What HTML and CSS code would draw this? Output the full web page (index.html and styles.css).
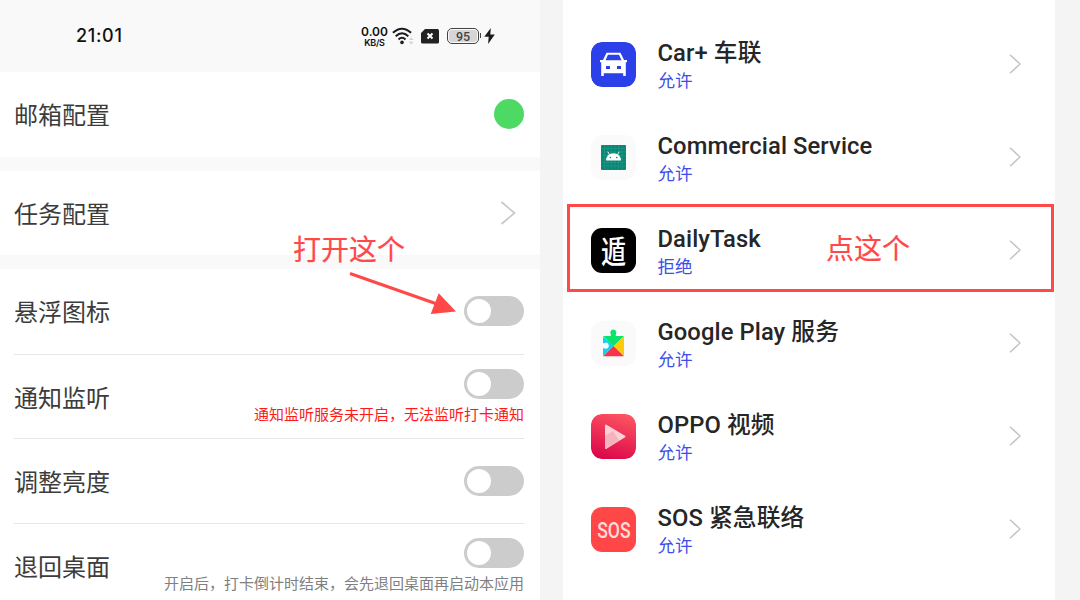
FILE: index.html
```html
<!DOCTYPE html>
<html lang="zh-CN">
<head>
<meta charset="utf-8">
<title>DailyTask</title>
<link rel="stylesheet" href="styles.css">
</head>
<body>
<div class="page">
  <section class="settings">
    <header class="status">
      <span class="clock">21:01</span>
      <div class="indicators">
        <div class="speed"><span class="rate">0.00</span><span class="unit">KB/S</span></div>
        <svg class="wifi" width="22" height="18" viewBox="0 0 22 18">
          <g fill="none" stroke="#1c1c1c" stroke-width="2">
            <path d="M.9 5.8Q10 -2.4 19.1 5.8"/><path d="M3.7 9.2Q10 3.4 16.3 9.2"/><path d="M6.5 12.4Q10 9.2 13.5 12.4"/>
          </g>
          <circle cx="10" cy="15.4" r="1.8" fill="#1c1c1c"/>
          <path d="M17 13l2.2-2.6 2.2 2.6zM17 14.8l2.2 2.6 2.2-2.6z" fill="#cfcfcf"/>
        </svg>
        <svg class="sim" width="18" height="15" viewBox="0 0 18 15">
          <path d="M4 0H16.5Q18 0 18 1.5V13Q18 14.500 16.500 14.500H1.500Q0 14.500 0 13V4z" fill="#222"/>
          <path d="M6.500 4.500l5 5M11.500 4.500l-5 5" stroke="#fff" stroke-width="2"/>
        </svg>
        <div class="battery"><span class="charge">95</span></div>
        <svg class="bolt" width="11" height="16" viewBox="0 0 11 16"><path d="M6.800 0L.3 8.700H4.700L4.100 16L10.800 6.600H6.300z" fill="#1c1c1c"/></svg>
      </div>
    </header>
    <div class="group">
      <div class="row"><span class="label">邮箱配置</span><span class="dot"></span></div>
    </div>
    <div class="group">
      <div class="row"><span class="label">任务配置</span><svg class="more" width="16" height="24" viewBox="0 0 16 24"><path d="M1.500 1L14.500 12L1.500 23"/></svg></div>
    </div>
    <div class="group">
      <div class="row"><span class="label">悬浮图标</span><span class="switch"></span></div>
      <div class="row"><span class="label">通知监听</span><div class="control"><span class="switch"></span><span class="hint warn">通知监听服务未开启，无法监听打卡通知</span></div></div>
      <div class="row"><span class="label">调整亮度</span><span class="switch"></span></div>
      <div class="row"><span class="label">退回桌面</span><div class="control"><span class="switch"></span><span class="hint">开启后，打卡倒计时结束，会先退回桌面再启动本应用</span></div></div>
    </div>
  </section>

  <section class="apps">
    <div class="app">
      <svg class="icon" viewBox="0 0 45 45">
        <rect width="45" height="45" rx="11" fill="#2c40ea"/>
        <path fill="#fff" fill-rule="evenodd" d="M15.500 10.700H29.500L33 18H36V20.200H34.800V34H32.200V31.300H12.800V34H10.200V20.200H9V18H12zM17 12.800L14.500 18.300H30.500L28 12.800zM15 24V27H19V24zM26 24V27H30V24z"/>
      </svg>
      <div class="info"><span class="name">Car+ 车联</span><span class="state">允许</span></div>
      <svg class="more" viewBox="0 0 12 20"><path d="M1 .7L11 10L1 19.300"/></svg>
    </div>
    <div class="app">
      <svg class="icon" viewBox="0 0 45 45">
        <rect width="45" height="45" rx="11" fill="#fafafa"/>
        <rect x="10" y="10" width="25" height="25" rx="1" fill="#078776"/>
        <path d="M13.500 10v25M17 10v25M20.500 10v25M24 10v25M27.500 10v25M31 10v25M10 13.500h25M10 17h25M10 20.500h25M10 24h25M10 27.500h25M10 31h25" stroke="#3b9f91" stroke-width=".4"/>
        <path d="M15 25.500a7.500 7.300 0 0 1 15 0z" fill="#fff"/>
        <path d="M18.600 20L16.800 16.700M26.400 20L28.200 16.700" stroke="#fff" stroke-width=".9"/>
        <circle cx="19.300" cy="22.500" r=".8" fill="#078776"/><circle cx="25.700" cy="22.500" r=".8" fill="#078776"/>
      </svg>
      <div class="info"><span class="name">Commercial Service</span><span class="state">允许</span></div>
      <svg class="more" viewBox="0 0 12 20"><path d="M1 .7L11 10L1 19.300"/></svg>
    </div>
    <div class="app">
      <div class="icon seal"><span class="seal-text">遁</span></div>
      <div class="info"><span class="name">DailyTask</span><span class="state">拒绝</span></div>
      <svg class="more" viewBox="0 0 12 20"><path d="M1 .7L11 10L1 19.300"/></svg>
    </div>
    <div class="app">
      <svg class="icon" viewBox="0 0 45 45">
        <rect width="45" height="45" rx="11" fill="#fafafa"/>
        <path d="M12 15.500L22.500 25L12 35z" fill="#12d0f5"/>
        <path d="M12 15H19.800V13.200A3 3 0 1 1 24.800 13.200V15H33L22.500 25.500z" fill="#0be36d"/>
        <path d="M33 15V35L22.500 25z" fill="#ffca0a"/>
        <path d="M12 35.300L22.500 25L33 35.300z" fill="#fb3348"/>
        <path d="M11.500 22.200H13.200A3 3 0 1 1 13.200 27.200H11.500z" fill="#fafafa"/>
      </svg>
      <div class="info"><span class="name">Google Play 服务</span><span class="state">允许</span></div>
      <svg class="more" viewBox="0 0 12 20"><path d="M1 .7L11 10L1 19.300"/></svg>
    </div>
    <div class="app">
      <svg class="icon" viewBox="0 0 45 45">
        <defs><linearGradient id="video" x1=".65" y1="0" x2=".35" y2="1"><stop offset="0" stop-color="#fb5360"/><stop offset="1" stop-color="#dc074b"/></linearGradient>
        <linearGradient id="play" x1="0" y1="1" x2="1" y2="0"><stop offset="0" stop-color="#f4a5b5"/><stop offset="1" stop-color="#ffe3e5"/></linearGradient></defs>
        <rect width="45" height="45" rx="11" fill="url(#video)"/>
        <path d="M15 11.500L33.500 22.500L15 34z" fill="#fbd0d6" stroke="#fbd0d6" stroke-width="2" stroke-linejoin="round"/>
        <path d="M14 22L22 17L28 26.500L15 34.500L14 34z" fill="#f19bac" opacity=".55"/>
      </svg>
      <div class="info"><span class="name">OPPO 视频</span><span class="state">允许</span></div>
      <svg class="more" viewBox="0 0 12 20"><path d="M1 .7L11 10L1 19.300"/></svg>
    </div>
    <div class="app">
      <div class="icon sos"><span class="sos-text">SOS</span></div>
      <div class="info"><span class="name">SOS 紧急联络</span><span class="state">允许</span></div>
      <svg class="more" viewBox="0 0 12 20"><path d="M1 .7L11 10L1 19.300"/></svg>
    </div>
  </section>

  <span class="note note-open">打开这个</span>
  <svg class="arrow" width="108" height="46" viewBox="0 0 108 46"><path d="M1 4.500L88 35" stroke="#ff4848" stroke-width="3"/><path d="M89.700 24.300L107 42.500L81.700 45z" fill="#ff4848"/></svg>
  <div class="frame"></div>
  <span class="note note-tap">点这个</span>
</div>
</body>
</html>
```
FILE: styles.css
```css
* { box-sizing: border-box; }
body {
  margin: 0;
  font-family: Roboto, "Noto Sans CJK SC", sans-serif;
}
.page {
  position: relative;
  display: flex;
  justify-content: space-between;
  width: 1080px;
  height: 600px;
  padding-right: 25px;
  overflow: hidden;
  background: #f4f4f4;
}
.settings {
  display: flex;
  flex-direction: column;
  gap: 14px;
  width: 540px;
  background: #f9f9f9;
}
.status {
  display: flex;
  align-items: center;
  justify-content: space-between;
  height: 72px;
  margin-bottom: -14px;
  padding: 0 45px 0 76px;
  flex: none;
}
.clock {
  font: 500 18px/20px Inter, sans-serif;
  letter-spacing: .7px;
  color: #111;
}
.indicators { display: flex; align-items: center; }
.speed {
  display: flex;
  flex-direction: column;
  align-items: center;
  width: 27px;
  margin-right: 4px;
  font-family: Inter, sans-serif;
  color: #111;
}
.rate { font-size: 12px; font-weight: 600; line-height: 12px; }
.unit { font-size: 9px; font-weight: 600; line-height: 9px; letter-spacing: -.3px; }
.wifi { margin-right: 7px; }
.sim { margin-right: 8px; }
.battery {
  position: relative;
  width: 32px;
  height: 16px;
  padding: 1px;
  border: 1.500px solid #444;
  border-radius: 5px;
}
.battery::after {
  content: "";
  position: absolute;
  right: -3px;
  top: 4px;
  width: 1.500px;
  height: 5px;
  background: #444;
}
.charge {
  display: block;
  height: 100%;
  border-radius: 3px;
  background: #d6d6d6;
  font: 500 12.500px/13px Roboto, sans-serif;
  text-align: center;
  color: #444;
}
.bolt { margin-left: 5px; }
.group { padding: 0 16px 0 14px; background: #fff; }
.row {
  display: flex;
  align-items: center;
  justify-content: space-between;
  height: 84.600px;
}
.row + .row { border-top: 1px solid #e6e6e6; }
.label {
  font: 400 24px/36px "Noto Sans CJK SC", sans-serif;
  color: #3c3c3c;
}
.dot { width: 30px; height: 30px; border-radius: 50%; background: #4cd964; }
.more { fill: none; stroke: #c8c8c8; stroke-width: 1.700px; }
.settings .more { margin-right: 8px; }
.switch {
  display: flex;
  align-items: center;
  width: 60px;
  height: 30px;
  padding-left: 3px;
  border-radius: 15px;
  background: #ccc;
}
.switch::before {
  content: "";
  width: 24px;
  height: 24px;
  border-radius: 50%;
  background: #fff;
}
.control {
  display: flex;
  flex-direction: column;
  align-items: flex-end;
  gap: 4px;
}
.hint {
  font: 400 15px/22px "Noto Sans CJK SC", sans-serif;
  color: #808080;
}
.warn { color: #ff1a1a; }
.apps {
  width: 492px;
  padding: 17.500px 34px 0 28px;
  background: #fff;
}
.app { display: flex; align-items: center; height: 93px; }
.icon { width: 45px; height: 45px; border-radius: 11px; flex: none; }
.info {
  display: flex;
  flex-direction: column;
  flex: 1;
  margin-left: 21.500px;
  padding-top: 4.500px;
  white-space: nowrap;
}
.name { font-size: 23.750px; font-weight: 500; line-height: 30px; letter-spacing: .1px; color: #262626; }
.state { font-size: 17.500px; line-height: 26px; color: #3d4ee8; }
.apps .more { width: 12px; height: 20px; stroke: #c4c4c4; stroke-width: 1.500px; }
.seal, .sos { display: flex; align-items: center; justify-content: center; }
.seal { background: #000; }
.seal-text { font: 500 27px/45px "Noto Sans CJK SC", sans-serif; color: #fff; transform: translateY(-1px) scale(.93, 1.150); }
.sos { background: #ff4747; }
.sos-text { font: 500 22px/45px Roboto, sans-serif; color: #ffdcdc; transform: translateY(1px) scaleX(.8); }
.note {
  position: absolute;
  font: 400 28px/40px "Noto Sans CJK SC", sans-serif;
  color: #ff4848;
  -webkit-text-stroke: .2px #ff4848;
}
.note-open { left: 293px; top: 228px; }
.note-tap { left: 826px; top: 227px; }
.arrow { position: absolute; left: 349px; top: 269px; }
.frame {
  position: absolute;
  left: 567px;
  top: 204px;
  width: 487px;
  height: 88px;
  border: 3px solid #ff4848;
}
```
